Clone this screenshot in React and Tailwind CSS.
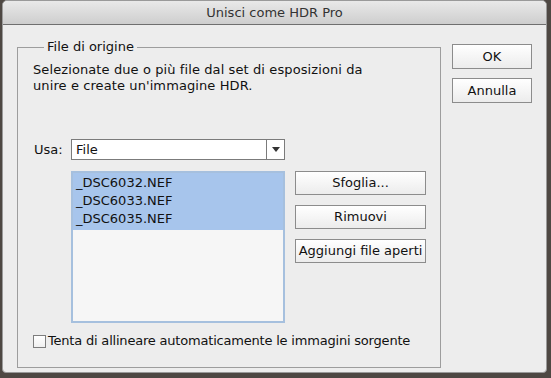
import React from "react";

const files = ["_DSC6032.NEF", "_DSC6033.NEF", "_DSC6035.NEF"];

// pulsante stile Mac classico
function Btn({ children, className = "" }) {
  return (
    <div
      className={
        "flex items-center justify-center border border-[#8c8c8c] bg-gradient-to-b from-white to-[#ececec] text-[13px] text-[#111] " +
        className
      }
    >
      {children}
    </div>
  );
}

export default function App() {
  return (
    <div
      className="w-[551px] h-[378px] bg-[#4e4843] overflow-hidden"
      style={{ fontFamily: '"DejaVu Sans", "Noto Sans", sans-serif' }}
    >
      <div className="ml-[2px] w-[545px] h-[373px] bg-[#ededed] rounded-t-[5px] rounded-b-[4px] border border-[#9a9a9a] flex flex-col">
        {/* TITLE */}
        <div className="h-[24px] shrink-0 bg-gradient-to-b from-[#e9e9e9] to-[#cecece] border-b border-[#6f6f6f] rounded-t-[5px] flex items-center justify-center text-[13px] text-[#333]">
          Unisci come HDR Pro
        </div>

        {/* BODY */}
        <div className="flex items-start">
          <fieldset className="ml-[14px] mt-[14px] w-[424px] border border-[#9d9d9d] pl-[15px] pr-[14px] pb-[18px]">
            <legend className="ml-[11px] px-[3px] text-[13px] leading-[16px] text-[#111]">
              File di origine
            </legend>

            <div className="pt-[7px] text-[13px] leading-[16px] text-[#111] tracking-[0.1px]">
              Selezionate due o più file dal set di esposizioni da
              <br />
              unire e create un'immagine HDR.
            </div>

            <div className="mt-[45px] flex items-center">
              <div className="w-[38px] text-[13px] text-[#111] pl-[1px]">Usa:</div>
              <div className="w-[214px] h-[21px] border border-[#7b7b7b] bg-white flex">
                <div className="flex-1 pl-[4px] text-[13px] leading-[19px] text-[#111]">File</div>
                <div className="w-[18px] border-l border-[#7b7b7b] flex items-center justify-center">
                  <div className="w-0 h-0 border-l-[4px] border-r-[4px] border-t-[5px] border-l-transparent border-r-transparent border-t-[#333]" />
                </div>
              </div>
            </div>

            <div className="mt-[11px] flex">
              <div className="ml-[38px] w-[214px] h-[152px] border-2 border-[#a6c0de] bg-[#f6f6f6]">
                <div className="bg-[#a7c5ec] pt-[1px] pb-[2px]">
                  {files.map((f) => (
                    <div key={f} className="pl-[3px] h-[18px] text-[13px] leading-[18px] text-[#111]">
                      {f}
                    </div>
                  ))}
                </div>
              </div>

              <div className="ml-[10px] flex flex-col gap-[10px]">
                <Btn className="w-[131px] h-[24px]">Sfoglia...</Btn>
                <Btn className="w-[131px] h-[24px]">Rimuovi</Btn>
                <Btn className="w-[131px] h-[24px]">Aggiungi file aperti</Btn>
              </div>
            </div>

            <div className="mt-[10px] flex items-center">
              <div className="w-[13px] h-[13px] border border-[#7d7d7d] bg-gradient-to-b from-white to-[#f0f0f0]" />
              <div className="ml-[2px] text-[13px] leading-[16px] text-[#111] tracking-[-0.2px]">
                Tenta di allineare automaticamente le immagini sorgente
              </div>
            </div>
          </fieldset>

          <div className="ml-[11px] mt-[19px] flex flex-col gap-[9px]">
            <Btn className="w-[80px] h-[25px]">OK</Btn>
            <Btn className="w-[80px] h-[25px]">Annulla</Btn>
          </div>
        </div>
      </div>
    </div>
  );
}
